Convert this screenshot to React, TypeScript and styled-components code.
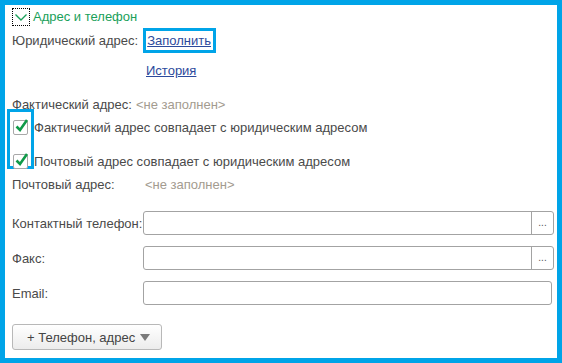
import React from 'react'
import styled, { createGlobalStyle } from 'styled-components'

const GlobalStyle = createGlobalStyle`
  html, body {
    margin: 0;
    padding: 0;
    background: #ffffff;
  }
  body {
    font-family: 'Liberation Sans', Arial, sans-serif;
    font-size: 13px;
    color: #4a4a4a;
  }
`

const Frame = styled.div`
  width: 562px;
  height: 363px;
  box-sizing: border-box;
  border: 5px solid #00a4e8;
  background: #ffffff;
  padding: 2px 3px 0 7px;
  display: flex;
  flex-direction: column;
`

const Row = styled.div<{ $h: number; $mt: number }>`
  display: flex;
  align-items: center;
  height: ${(p) => p.$h}px;
  margin-top: ${(p) => p.$mt}px;
  white-space: nowrap;
`

const Toggle = styled.span`
  width: 18px;
  height: 18px;
  box-sizing: border-box;
  border: 1px dotted #000;
  display: inline-flex;
  align-items: center;
  justify-content: center;
  margin-right: 3px;
`

const GroupTitle = styled.span`
  color: #1aa05a;
`

const Label = styled.span<{ $w?: number }>`
  display: inline-block;
  width: ${(p) => (p.$w ? `${p.$w}px` : 'auto')};
  flex-shrink: 0;
`

const Empty = styled.span<{ $ml?: number }>`
  color: #a39b8f;
  margin-left: ${(p) => p.$ml ?? 0}px;
`

const Highlight = styled.span`
  display: inline-flex;
  align-items: center;
  box-sizing: border-box;
  height: 25px;
  border: 3px solid #00a4e8;
  padding: 0 2px 0 1px;
  margin-left: 5px;
`

const Link = styled.a<{ $ml?: number }>`
  color: #2c4a9c;
  text-decoration: underline;
  margin-left: ${(p) => p.$ml ?? 0}px;
  cursor: pointer;
`

const CheckGroup = styled.div`
  position: relative;
  display: flex;
  flex-direction: column;
`

const CheckMarker = styled.div`
  position: absolute;
  left: -5px;
  top: -4px;
  width: 27px;
  height: 60px;
  box-sizing: border-box;
  border: 3px solid #00a4e8;
  pointer-events: none;
`

const Box = styled.span`
  position: relative;
  width: 15px;
  height: 15px;
  box-sizing: border-box;
  border: 1px solid #a8a8a8;
  border-radius: 2px;
  background: #fff;
  margin: 0 6px 0 1px;
  flex-shrink: 0;
  svg {
    position: absolute;
    left: 0px;
    top: -3px;
  }
`

const Field = styled.div<{ $mr?: number }>`
  flex: 1;
  height: 24px;
  margin-right: ${(p) => p.$mr ?? 0}px;
  box-sizing: border-box;
  border: 1px solid #a3a3a3;
  border-radius: 3px;
  background: #fff;
  display: flex;
`

const FieldInput = styled.div`
  flex: 1;
`

const PickButton = styled.div`
  width: 21px;
  border-left: 1px solid #a3a3a3;
  display: flex;
  align-items: center;
  justify-content: center;
  font-size: 10px;
  color: #555;
  padding-bottom: 2px;
`

const MenuButton = styled.button`
  width: 150px;
  height: 26px;
  box-sizing: border-box;
  border: 1px solid #b8b8b8;
  border-radius: 3px;
  background: linear-gradient(#ffffff, #ececec);
  font-family: 'Liberation Sans', Arial, sans-serif;
  font-size: 13px;
  color: #444;
  display: flex;
  align-items: center;
  justify-content: space-between;
  padding: 0 11px 0 14px;
`

const Check: React.FC<{ label: string }> = ({ label }) => (
  <>
    <Box>
      <svg width="15" height="15" viewBox="0 0 15 15">
        <path d="M2.5 8.5 L6 12 L13 2" fill="none" stroke="#0f9a48" strokeWidth="2.6" />
      </svg>
    </Box>
    <span>{label}</span>
  </>
)

export default function App() {
  return (
    <>
      <GlobalStyle />
      <Frame>
        <Row $h={19} $mt={0}>
          <Toggle>
            <svg width="14" height="10" viewBox="0 0 14 10">
              <path d="M1.5 2.5 L7 8 L12.5 2.5" fill="none" stroke="#1aa05a" strokeWidth="1.4" />
            </svg>
          </Toggle>
          <GroupTitle>Адрес и телефон</GroupTitle>
        </Row>
        <Row $h={25} $mt={2}>
          <Label>Юридический адрес:</Label>
          <Highlight>
            <Link>Заполнить</Link>
          </Highlight>
        </Row>
        <Row $h={18} $mt={8}>
          <Link $ml={134}>История</Link>
        </Row>
        <Row $h={18} $mt={16}>
          <Label>Фактический адрес:</Label>
          <Empty $ml={4}>&lt;не заполнен&gt;</Empty>
        </Row>
        <CheckGroup>
          <CheckMarker />
          <Row $h={18} $mt={5}>
            <Check label="Фактический адрес совпадает с юридическим адресом" />
          </Row>
          <Row $h={18} $mt={16}>
            <Check label="Почтовый адрес совпадает с юридическим адресом" />
          </Row>
        </CheckGroup>
        <Row $h={18} $mt={5}>
          <Label $w={133}>Почтовый адрес:</Label>
          <Empty>&lt;не заполнен&gt;</Empty>
        </Row>
        <Row $h={24} $mt={18}>
          <Label $w={131}>Контактный телефон:</Label>
          <Field>
            <FieldInput />
            <PickButton>...</PickButton>
          </Field>
        </Row>
        <Row $h={24} $mt={11}>
          <Label $w={131}>Факс:</Label>
          <Field>
            <FieldInput />
            <PickButton>...</PickButton>
          </Field>
        </Row>
        <Row $h={24} $mt={11}>
          <Label $w={131}>Email:</Label>
          <Field $mr={2}>
            <FieldInput />
          </Field>
        </Row>
        <Row $h={26} $mt={19}>
          <MenuButton>
            <span>+ Телефон, адрес</span>
            <svg width="10" height="7" viewBox="0 0 10 7">
              <path d="M0 0 H10 L5 7 Z" fill="#7a7a7a" />
            </svg>
          </MenuButton>
        </Row>
      </Frame>
    </>
  )
}
